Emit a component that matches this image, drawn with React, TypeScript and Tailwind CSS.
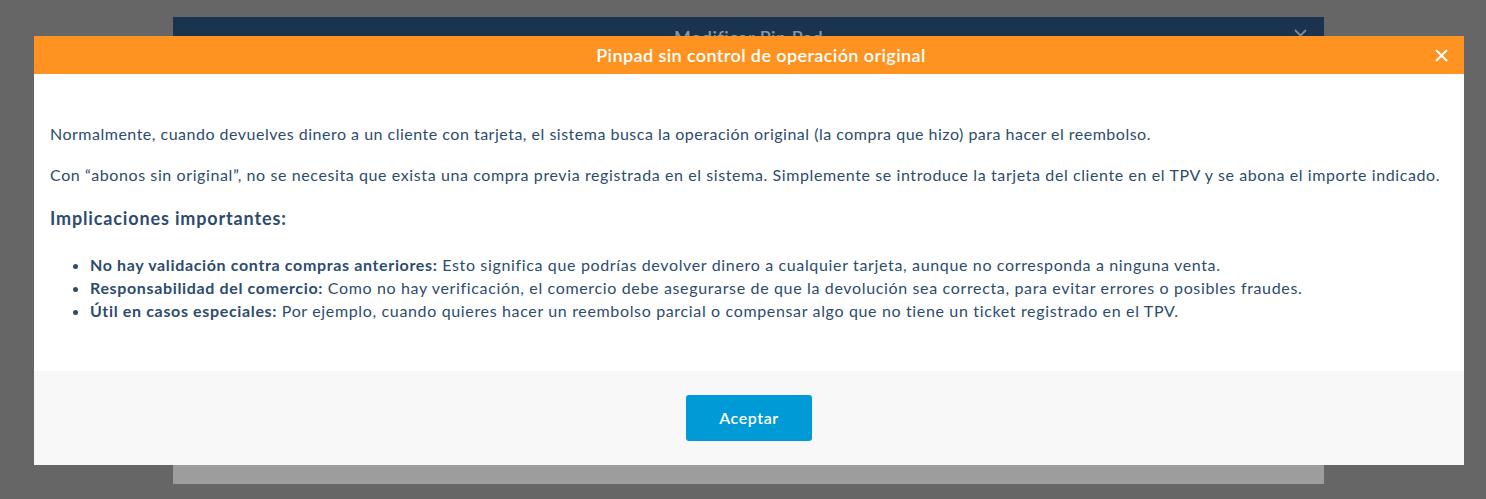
import React from "react";

const font = { fontFamily: "Lato, 'Noto Sans', sans-serif" };

export default function App() {
  return (
    <div className="relative h-[499px] w-[1486px] overflow-hidden bg-[#666666]" style={font}>
      {/* back modal */}
      <div className="ml-[173px] pt-[17px]">
        <div className="flex h-[467px] w-[1151px] flex-col bg-[#9d9d9d]">
          <div className="relative flex h-[40px] items-start justify-center bg-[#1a344f] pt-[7px]">
            <span className="text-[18px] font-semibold tracking-[0.5px] text-[#8b96a2]">Modificar Pin Pad</span>
            <svg className="absolute right-[17px] top-[12px]" width="13" height="13" viewBox="0 0 13 13">
              <path d="M1 1L12 12M12 1L1 12" stroke="#7d8793" strokeWidth="1.8" />
            </svg>
          </div>
        </div>
      </div>

      {/* front modal */}
      <div className="absolute left-[34px] top-[36px] flex w-[1430px] flex-col bg-white">
        <div className="relative flex h-[38px] items-center justify-center bg-[#ff9321] pl-[24px]">
          <span className="text-[18px] font-semibold tracking-[0.4px] text-white">Pinpad sin control de operación original</span>
          <button className="absolute right-[16px] top-[13px]">
            <svg width="13" height="13" viewBox="0 0 13 13" className="block">
              <path d="M1 1L12 12M12 1L1 12" stroke="#ffffff" strokeWidth="2" />
            </svg>
          </button>
        </div>
        <div className="px-4 pb-[33px] pt-[47px] text-[16px] text-[#2d4c6d]">
          <p className="mb-4 leading-[25px] tracking-[0.5px]">
            Normalmente, cuando devuelves dinero a un cliente con tarjeta, el sistema busca la operación original (la compra que hizo) para hacer el reembolso.
          </p>
          <p className="mb-4 leading-[25px] tracking-[0.6px]">
            Con “abonos sin original”, no se necesita que exista una compra previa registrada en el sistema. Simplemente se introduce la tarjeta del cliente en el TPV y se abona el importe indicado.
          </p>
          <h3 className="text-[18px] font-bold leading-[31px] tracking-[0.85px]">Implicaciones importantes:</h3>
          <ul className="mt-[19px] mb-4 list-disc pl-10 leading-[23px] tracking-[0.65px]">
            <li>
              <strong className="font-bold">No hay validación contra compras anteriores:</strong> Esto significa que podrías devolver dinero a cualquier tarjeta, aunque no corresponda a ninguna venta.
            </li>
            <li>
              <strong className="font-bold">Responsabilidad del comercio:</strong> Como no hay verificación, el comercio debe asegurarse de que la devolución sea correcta, para evitar errores o posibles fraudes.
            </li>
            <li>
              <strong className="font-bold">Útil en casos especiales:</strong> Por ejemplo, cuando quieres hacer un reembolso parcial o compensar algo que no tiene un ticket registrado en el TPV.
            </li>
          </ul>
        </div>
        <div className="flex h-[94px] items-center justify-center bg-[#f8f8f8]">
          <button className="h-[46px] w-[126px] rounded-[3px] bg-[#009ad6] text-[16px] font-semibold tracking-[0.6px] text-white">
            Aceptar
          </button>
        </div>
      </div>
    </div>
  );
}
